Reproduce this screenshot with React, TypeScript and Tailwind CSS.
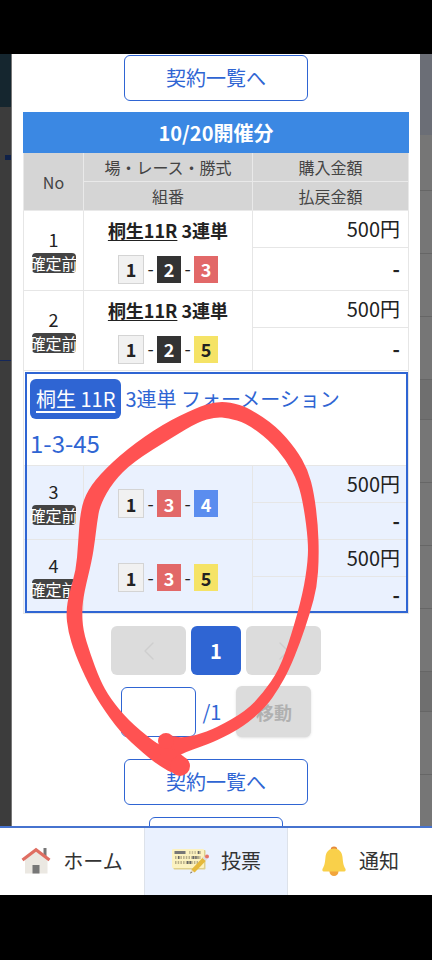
import React, { useState } from "react";
import { ChevronLeft, ChevronRight } from "lucide-react";

type Bet = {
  no: number;
  race?: string;
  type?: string;
  combo: number[];
  amount: string;
  payout: string;
};

const SINGLE_BETS: Bet[] = [
  { no: 1, race: "桐生11R", type: "3連単", combo: [1, 2, 3], amount: "500円", payout: "-" },
  { no: 2, race: "桐生11R", type: "3連単", combo: [1, 2, 5], amount: "500円", payout: "-" },
];

const FORMATION_BETS: Bet[] = [
  { no: 3, combo: [1, 3, 4], amount: "500円", payout: "-" },
  { no: 4, combo: [1, 3, 5], amount: "500円", payout: "-" },
];

// Boat colours
const BOAT: Record<number, string> = {
  1: "w-[26px] h-[29px] border border-[#d4d4d4] bg-[#f1f1f1] text-[#222]",
  2: "w-6 h-[27px] bg-[#333] text-white",
  3: "w-6 h-[27px] bg-[#e26868] text-white",
  4: "w-6 h-[27px] bg-[#5b8def] text-white",
  5: "w-6 h-[27px] bg-[#f5e366] text-[#222]",
};

const Combo = ({ combo }: { combo: number[] }) => (
  <div className="flex items-center justify-center">
    {combo.map((n, i) => (
      <React.Fragment key={n}>
        {i > 0 && <span className="w-[13px] pb-0.5 text-center text-lg leading-6">-</span>}
        <span className={`flex items-center justify-center text-lg font-bold leading-6 ${BOAT[n]}`}>{n}</span>
      </React.Fragment>
    ))}
  </div>
);

const BetRows = ({ bet, rowClass }: { bet: Bet; rowClass: string }) => (
  <>
    <tr className={rowClass}>
      <td rowSpan={2} className="border border-[#e6e6e6]">
        <div className="flex flex-col items-center">
          <span className="text-lg leading-5">{bet.no}</span>
          <span className="mt-1 flex h-5 w-11 items-center justify-center whitespace-nowrap rounded bg-[#444] text-base leading-5 text-white">
            確定前
          </span>
        </div>
      </td>
      <td rowSpan={2} className={`border border-[#e6e6e6] ${bet.race ? "pb-0.5" : "pt-0.5"}`}>
        {bet.race && (
          <p className="mb-[11px] text-center text-lg font-bold leading-7">
            <a href="#race" className="underline underline-offset-2">{bet.race}</a> {bet.type}
          </p>
        )}
        <Combo combo={bet.combo} />
      </td>
      <td className="h-[37px] border border-[#e6e6e6] pr-2 text-right text-xl leading-6">{bet.amount}</td>
    </tr>
    <tr className={rowClass}>
      <td className={`border border-[#e6e6e6] pr-2 text-right text-xl font-bold leading-6 ${bet.race ? "h-[43px]" : "h-[37px]"}`}>
        {bet.payout}
      </td>
    </tr>
  </>
);

const BetTable = () => (
  <table className="mt-[11px] w-full table-fixed border-collapse text-[#222]">
    <colgroup>
      <col className="w-[60px]" />
      <col className="w-[169px]" />
      <col />
    </colgroup>
    <thead className="bg-[#d5d5d5] text-base leading-6 text-[#444]">
      <tr>
        <th colSpan={3} className="h-10 border border-[#3b88e3] bg-[#3b88e3] text-xl font-bold leading-7 text-white">
          10/20開催分
        </th>
      </tr>
      <tr>
        <th rowSpan={2} className="border border-[#e9e9e9] font-normal">No</th>
        <th className="h-[29px] border border-[#e9e9e9] font-normal">場・レース・勝式</th>
        <th className="border border-[#e9e9e9] font-normal">購入金額</th>
      </tr>
      <tr>
        <th className="h-[29px] border border-[#e9e9e9] font-normal">組番</th>
        <th className="border border-[#e9e9e9] font-normal">払戻金額</th>
      </tr>
    </thead>
    <tbody>
      {SINGLE_BETS.map((bet) => (
        <BetRows key={bet.no} bet={bet} rowClass="bg-white" />
      ))}
    </tbody>
    <tbody className="outline-2 -outline-offset-3 outline-[#2f65d3]">
      <tr>
        <td colSpan={3} className="h-[95px] border border-[#e6e6e6] px-1.5 align-top text-[#2f65d3]">
          <div className="mt-2 flex items-center gap-1 text-xl leading-7">
            <a href="#race" className="flex h-10 items-center rounded-md bg-[#2f65d3] px-1.5 text-white underline underline-offset-4">
              桐生 11R
            </a>
            <span>3連単 フォーメーション</span>
          </div>
          <p className="mt-2 text-2xl leading-8">1-3-45</p>
        </td>
      </tr>
      {FORMATION_BETS.map((bet) => (
        <BetRows key={bet.no} bet={bet} rowClass="bg-[#eaf1fe]" />
      ))}
    </tbody>
  </table>
);

const Pager = () => {
  const [page, setPage] = useState("");

  return (
    <>
      <nav className="mt-3 flex justify-center gap-[5px]">
        <button aria-label="前へ" disabled className="flex h-[49px] w-[75px] items-center justify-center rounded-md bg-[#dcdcdc] text-[#cecece]">
          <ChevronLeft className="h-8 w-8" strokeWidth={1} />
        </button>
        <button className="h-[49px] w-[50px] rounded-md bg-[#2f65d3] text-xl font-bold text-white">1</button>
        <button aria-label="次へ" disabled className="flex h-[49px] w-[75px] items-center justify-center rounded-md bg-[#dcdcdc] text-[#cecece]">
          <ChevronRight className="h-8 w-8" strokeWidth={1} />
        </button>
      </nav>
      <form className="mt-[11px] flex items-center justify-center" onSubmit={(e) => e.preventDefault()}>
        <input
          aria-label="ページ"
          value={page}
          onChange={(e) => setPage(e.target.value)}
          className="h-[50px] w-[75px] rounded-md border border-[#2f65d3] bg-white px-2 text-xl text-[#2f65d3]"
        />
        <span className="ml-[7px] mr-[15px] text-xl text-[#2f65d3]">/1</span>
        <button disabled className="h-[51px] w-[75px] rounded-md bg-[#dcdcdc] text-lg font-bold text-[#b0b0b0] shadow">
          移動
        </button>
      </form>
    </>
  );
};

const ListButton = () => (
  <button className="mx-auto block h-[46px] w-[184px] shrink-0 rounded-md border border-[#2f65d3] bg-white text-xl leading-7 text-[#2f65d3]">
    契約一覧へ
  </button>
);

const HouseIcon = () => (
  <svg viewBox="0 0 30 28" className="h-7 w-[30px]">
    <rect x="22.5" y="1" width="3" height="8" fill="#777" />
    <path d="M4 12 15 3l11.500 9v14.500H4z" fill="#ebe8e2" />
    <path d="M1.500 13 15 2.800 28.500 13" fill="none" stroke="#df6e62" strokeWidth="3.200" />
    <rect x="11.500" y="18" width="7" height="8.500" fill="#777" />
  </svg>
);

const TicketIcon = () => (
  <svg viewBox="0 0 38 26" className="h-[26px] w-[38px]">
    <rect x="2.500" y="2" width="32" height="19.500" rx="1" fill="#dfd08c" />
    <rect x="1" y="1" width="32" height="19" rx="1" fill="#fcf2c0" />
    <rect x="3.500" y="3" width="11" height="3" fill="#777" />
    <path d="M18 4.500h12" stroke="#c9c09a" strokeWidth="3" strokeDasharray="1.500 1.200" />
    <path d="M4 9.500h25.500M4 14.500h25.500" stroke="#b8af8a" strokeWidth="3" strokeDasharray="1.500 1.200" />
    <path d="M7 9.500h1.500M21.500 9.500h6M16 14.500h5M27 4.500h1.500" stroke="#666" strokeWidth="3" strokeDasharray="1.500 1.200" />
    <path d="m19 25.500 2-5 3 3z" fill="#e8dcc4" />
    <path d="m19 25.500 1-2 1.200 1.200z" fill="#777" />
    <path d="M22 23 33.500 11" stroke="#e5b93c" strokeWidth="4.500" />
    <path d="m33 11.500 1.500-1.600" stroke="#ddd" strokeWidth="4.500" />
    <circle cx="36" cy="8.500" r="2" fill="#e57368" />
  </svg>
);

const BellIcon = () => (
  <svg viewBox="0 0 26 30" className="h-[30px] w-[26px]">
    <circle cx="13" cy="3.800" r="3.300" fill="#e58a3a" />
    <circle cx="13" cy="25.500" r="4.500" fill="#f2a53c" />
    <path d="M13 2.500c-5 0-8 3.500-8.500 8.500C4 17 3.500 19.500 1.700 22.500 1 24 1.300 25.500 2.800 25.500h20.400c1.500 0 1.800-1.500 1.100-3-1.800-3-2.300-5.500-2.800-11.500C21 6 18 2.500 13 2.500z" fill="#f9d04a" />
  </svg>
);

const TABS = [
  { label: "ホーム", icon: <HouseIcon />, active: false },
  { label: "投票", icon: <TicketIcon />, active: true },
  { label: "通知", icon: <BellIcon />, active: false },
];

const TabBar = () => (
  <nav className="grid h-[69px] shrink-0 grid-cols-3 border-t-2 border-[#4673cf] bg-white">
    {TABS.map((tab) => (
      <a
        key={tab.label}
        href="#tab"
        className={`flex items-center justify-center gap-3 pb-0.5 text-xl text-[#333] ${
          tab.active ? "border-x border-[#dde2ea] bg-[#eaf1fe]" : ""
        }`}
      >
        {tab.icon}
        {tab.label}
      </a>
    ))}
  </nav>
);

// Hand-drawn marker ring: outline of the stroke, smoothed through the midpoints
const MARKER: [number, number][] = [
  [183, 757], [168, 750], [153, 741], [128, 720], [110, 698], [100, 680], [90, 653], [83, 630], [82, 610],
  [84, 593], [92, 560], [95, 540], [97, 523], [100, 505], [113, 482], [133, 462], [173, 437], [198, 422], [216, 417],
  [228, 418], [246, 423], [269, 440], [286, 460], [298, 482], [304, 508], [308, 540], [308, 560], [303, 593],
  [291, 636], [279, 670], [263, 693], [246, 711], [216, 728], [197, 735], [180, 738], [172, 735],
  [162, 744], [172, 753], [178, 756], [186, 752], [200, 747], [216, 741], [243, 727], [266, 707], [279, 688], [289, 670], [300, 643], [310, 613],
  [317, 587], [319, 557], [318, 525], [314, 493], [308, 470], [296, 449], [276, 426], [249, 408], [230, 402], [214, 402],
  [196, 408], [163, 424], [127, 449], [99, 475], [85, 495], [80, 515], [78, 545], [76, 570], [69, 594], [66, 612],
  [68, 631], [75, 654], [88, 683], [100, 704], [120, 732], [143, 753], [158, 765], [177, 776],
];

const smooth = (pts: [number, number][]) => {
  const mid = (a: [number, number], b: [number, number]) => `${(a[0] + b[0]) / 2} ${(a[1] + b[1]) / 2}`;
  const last = pts[pts.length - 1];
  return `M${mid(last, pts[0])}` + pts.map((p, i) => `Q${p[0]} ${p[1]} ${mid(p, pts[(i + 1) % pts.length])}`).join("") + "Z";
};

const Marker = () => (
  <svg viewBox="0 0 432 960" className="pointer-events-none absolute left-0 top-0 w-full" fill="#ff5252">
    <path d={smooth(MARKER)} />
    <path d="M160 745 152 741 165 762 181 776 184 757 176 750z" />
    <circle cx="180" cy="766" r="10" />
    <circle cx="166" cy="741" r="8" />
  </svg>
);

const App = () => (
  <div className="relative flex h-screen flex-col overflow-hidden bg-black font-['Noto_Sans_CJK_JP',sans-serif]">
    <div className="h-[54px] shrink-0" />

    <div className="flex min-h-0 flex-1 overflow-hidden">
      {/* Dimmed page, left side */}
      <div className="flex w-3 shrink-0 flex-col border-r border-[#777] bg-[#3c3c3c]">
        <div className="h-[53px] bg-[#15262f]" />
        <div className="ml-[5px] mt-12 h-[5px] bg-[#0f2148]" />
        <div className="mt-[200px] h-px bg-[#14275a]" />
      </div>

      <main className="min-w-0 flex-1 bg-white px-[11px] pt-px">
        <ListButton />
        <BetTable />
        <Pager />
        <div className="mt-[22px]">
          <ListButton />
        </div>
        <button aria-label="閉じる" className="mx-auto mt-3 block h-[46px] w-[134px] rounded-md border border-[#2f65d3] bg-white" />
      </main>

      {/* Dimmed page, right side */}
      <div className="w-3 shrink-0 bg-[#767676]">
        <div className="h-[81px] bg-[#6b6e76]" />
        <div className="h-14 border-b border-[#666]" />
        <div className="h-[63px] border-b border-[#666]" />
        <div className="h-[63px] border-b border-[#666]" />
        <div className="h-[63px] border-b border-[#666]" />
        <div className="h-10 border-b border-[#666] bg-[#6f6f6f]" />
        <div className="h-[63px] border-b border-[#666]" />
        <div className="h-[63px] border-b border-[#666]" />
        <div className="h-[63px] border-b border-[#666]" />
        <div className="h-[63px] border-b border-[#666]" />
        <div className="h-10 border-b border-[#666] bg-[#6f6f6f]" />
        <div className="h-[63px] border-b border-[#666]" />
      </div>
    </div>

    <TabBar />
    <div className="h-[65px] shrink-0" />
    <Marker />
  </div>
);

export default App;
